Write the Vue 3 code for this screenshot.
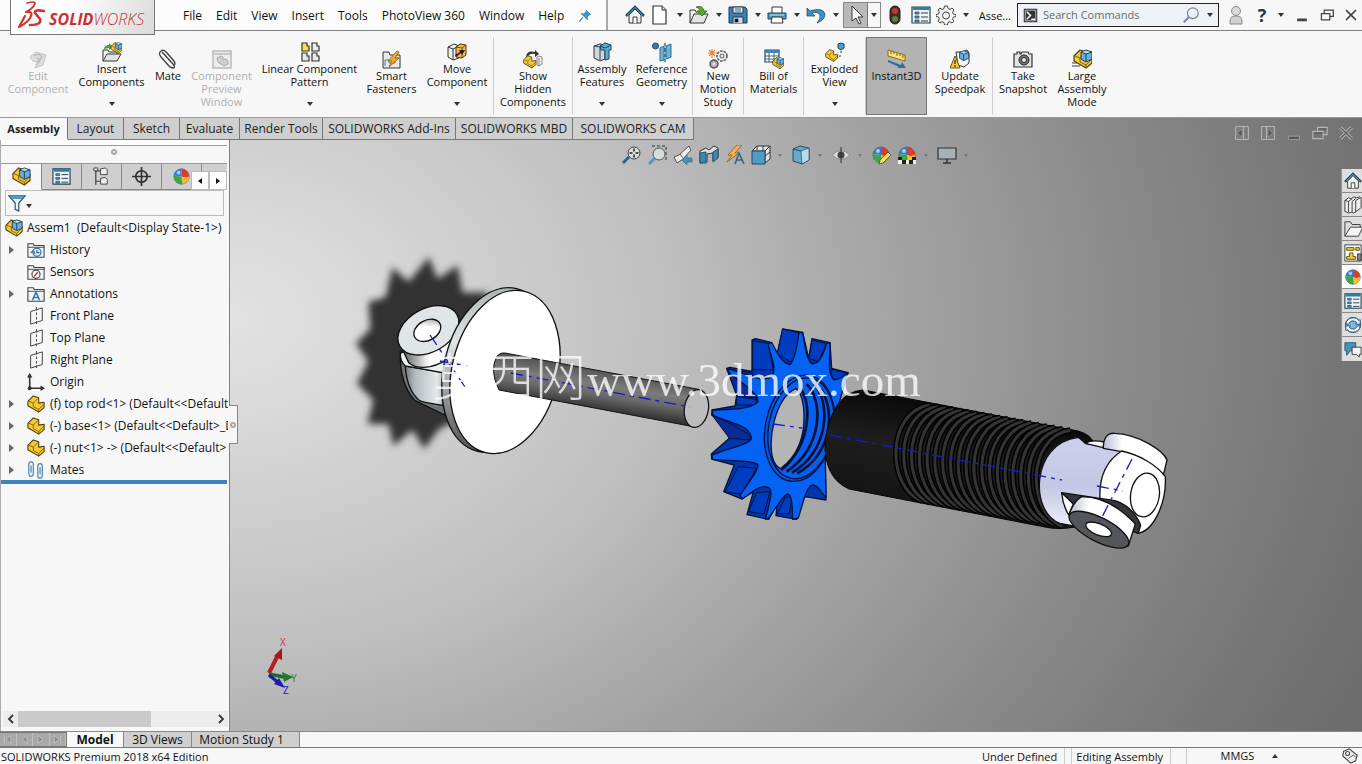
<script setup>
import { ref } from 'vue'

const sphere = '<circle cx="10" cy="10" r="8" fill="#e8e8e8" stroke="#444" stroke-width=".8"/><path d="M10 10V2a8 8 0 0 0-8 7z" fill="#2e7fd0"/><path d="M10 10 10 2a8 8 0 0 1 8 8q-4 2-8 0z" fill="#e03a2c"/><path d="M10 10q4 2 8 0a8 8 0 0 1-7 8z" fill="#f2c026"/><path d="M10 10 2 9a8 8 0 0 0 9 9z" fill="#3aa64a"/><circle cx="7" cy="6" r="2" fill="#fff" opacity=".6"/>'
const block = '<path d="M1 7 7 1l6 2v6l6-1v6l-6 5-12-7z" fill="#f7c92f" stroke="#4c3c10" stroke-width="1.200" stroke-linejoin="round"/><path d="m2 7 5 2 5-5M7 9v4l6 3 6-6M13 16v3" fill="none" stroke="#6b5413" stroke-width=".9"/>'
const cube = '<path d="m8 3 5-2 6 2v7l-6 3-5-3z" fill="#69aede" stroke="#1e3f5c"/><path d="m8 3 5 2 6-2M13 5v8" stroke="#1e3f5c" fill="none"/><path d="m9.500 3 3.500-1.300L17 3l-4 1.300z" fill="#b5dcf5"/>'
const folder = '<path d="M1 18V3h6l1 2h11v13z" fill="#f2f4f5" stroke="#444" stroke-width="1.200"/><path d="M1 7h18" stroke="#444"/>'
const plane = '<path d="M4 5 17 1v14L4 19zM10.500 0v4M10.500 6v3M10.500 11v3M10.500 16v3" fill="none" stroke="#444" stroke-width="1.100"/>'
const list = '<path d="M1 2h18v16H1z" fill="#eef2f4" stroke="#26404f" stroke-width="1.200"/><path d="M2 2h16v3H2z" fill="#2f7ea8"/><path d="M4 7h4v2H4zM4 11h4v2H4zM4 15h4v2H4z" fill="#4b9ac4" stroke="#26404f" stroke-width=".7"/><path d="M10 8h7M10 12h7M10 16h7" stroke="#26404f"/>'
const home = '<path d="M4 10v8h12v-8l-6-6z" fill="#f1f3f4" stroke="#333"/><path d="m1 11 9-9 9 9" fill="none" stroke="#22465c" stroke-width="2.500"/><path d="m2 10.500 8-8 8 8" fill="none" stroke="#58a3c8"/><path d="M8 18v-6h4v6" fill="#fff" stroke="#333"/>'

const icons = {
  home, list, block, sphere, plane,
  doc: '<path d="M3 1h9l4 4v14H3z" fill="#fff" stroke="#333" stroke-width="1.200"/><path d="M12 1v4h4" fill="#ddd" stroke="#333"/>',
  open: '<path d="M1 18V5h5l1 2h8v3" fill="#f0f0f0" stroke="#333"/><path d="m1 18 4-9h14l-4 9z" fill="#e2e4e5" stroke="#333"/><path d="M7 2q7-2 8 4h3l-5 5-5-5h3q0-3-4-4z" fill="#58a829" stroke="#2d6a13" stroke-width=".8"/>',
  save: '<path d="M1 2h16l2 2v14H1z" fill="#3d7fae" stroke="#1d3c54"/><path d="M5 2h10v6H5z" fill="#e7eef3" stroke="#1d3c54"/><path d="M5 18v-6h10v6" fill="#cfd9e0" stroke="#1d3c54"/><path d="M7 4h6M7 6h6M7 14h3v3H7z" stroke="#1d3c54" stroke-width=".8"/>',
  print: '<path d="M5 8V2h10v6" fill="#fff" stroke="#333"/><path d="M1 8h18v6H1z" fill="#4b9ac4" stroke="#23465b"/><path d="M5 12h10l1 6H4z" fill="#fff" stroke="#333"/><path d="M3 10h14" stroke="#b9def0"/>',
  undo: '<path d="M1 3v8h8L6 8q6-2 8 2 1 4-3 8 8-3 8-9Q17 2 4 6z" fill="#3f93c4" stroke="#1d4e70" stroke-width=".8"/>',
  pointer: '<path d="M6 1v15l4-3 3 6 2-1-3-6h5z" fill="#fff" stroke="#333"/>',
  light: '<rect x="5" y="1" width="10" height="18" rx="5" fill="#4a2a22" stroke="#222"/><circle cx="10" cy="6" r="3" fill="#c4352c"/><circle cx="10" cy="14" r="3" fill="#3f8f3f"/>',
  gear: '<path d="M8.500 1h3l.5 2.500 2 1L16 3l2 2-1.500 2.200.8 1.800 2.700.5v2l-2.700.7-.8 2L18 16l-2 2-2.200-1.300-1.800.8-.5 2.500h-3L8 17.500l-2-.8L4 18l-2-2 1.300-2-.8-2L0 11.500v-2L2.500 9l.8-2L2 5l2-2 2 1.500 2-1z" fill="#f4f4f4" stroke="#444"/><circle cx="10" cy="10.500" r="3.500" fill="none" stroke="#444"/>',
  pin: '<path d="m12 2 6 6-2 .5-3 3 .5 4-9-9 4 .5 3-3z" fill="#3c96cd" stroke="#2878a8"/><path d="m7 12-5 6" stroke="#2878a8" stroke-width="1.500"/>',
  user: '<circle cx="10" cy="6" r="4.500" fill="#d9d9d9" stroke="#8a8a8a"/><path d="M4 19v-3q0-5 6-5t6 5v3z" fill="#d0d0d0" stroke="#8a8a8a"/>',
  lens: '<circle cx="12" cy="8" r="6" fill="#e6f2fa" stroke="#7a8594" stroke-width="1.300"/><path d="m8 12-6 6" stroke="#8089b0" stroke-width="2.500"/>',
  prompt: '<path d="M1 1h18v18H1z" fill="#333"/><path d="M3 3h14v14H3z" fill="none" stroke="#ddd"/><path d="m5 5 5 5-5 5M11 15h5" fill="none" stroke="#fff" stroke-width="2"/>',
  min: '<path d="M3 15h14v4H3z" fill="#444"/>',
  restore: '<path d="M6 8V3h13v9h-5M2 8h12v9H2z" fill="none" stroke="#444" stroke-width="1.800"/>',
  close: '<path d="m3 3 14 14M17 3 3 17" stroke="#444" stroke-width="2.200"/>',
  editc: '<path d="m2 8 6-5 10 3-3 10-8 3 3-6-5-1z" fill="#dedede" stroke="#c4c4c4"/><path d="M6 7q5-4 8 1l-6 8M9 8l3 5" stroke="#bcbcbc" fill="none" stroke-width="1.500"/>',
  insert: '<path d="M1 19V8h5l1 2h8v3" fill="#f2f2f2" stroke="#333"/><path d="m1 19 4-7h14l-4 7z" fill="#e2e4e5" stroke="#333"/><path d="M2 8q0-5 5-5V1l4 4-4 3V6Q4 6 2 8z" fill="#4b9c35"/><g transform="translate(8.500 0) scale(.6)">' + block + cube + '</g>',
  mate: '<path d="m4 3 11 12q3 4 0 4-2 0-4-2L3 8Q0 4 3 2t6 2l7 8q2 3 0 4M6 5l7 8" fill="none" stroke="#444" stroke-width="1.400"/>',
  preview: '<path d="M1 2h18v17H1zM1 5h18" fill="#ededed" stroke="#bbb" stroke-width="1.500"/><path d="m5 9 4-2 2 1v3l3-1 2 2v3l-4 2-6-4z" fill="#d0d0d0" stroke="#aaa"/>',
  linear: '<g stroke="#333" stroke-width="1.200"><path d="M2 1h5v3h2v5H2z" fill="#f3e44c"/><path d="M12 1h5v3h2v5h-7zM2 11h5v3h2v5H2zM12 11h5v3h2v5h-7z" fill="#e8eaec"/></g>',
  smart: '<path d="M1 19V3h6l1 3h10v13z" fill="#e4eaee" stroke="#333"/><path d="M3 17v-6h4v3h6v-5h4" fill="none" stroke="#50799a"/><path d="M15 2 6 12h4l-3 6 10-9h-4l4-6z" fill="#f6a623" stroke="#8b5a10" stroke-width=".8"/>',
  move: '<path d="m1 5 6-3 5 2v12l-6 2-5-3z" fill="#eceef0" stroke="#333"/><path d="m1 5 5 2v11M6 7l6-3" fill="none" stroke="#333"/><path d="m9 5 4-3 6 1v10l-4 3-6-1z" fill="#f7b84e" stroke="#4c3410"/><path d="m9 5 6 1 4-3M15 6v10" fill="none" stroke="#4c3410" stroke-width=".8"/><path d="M8 13 13 10 12 8l6 0-3 5-1-2-5 4z" fill="#222"/>',
  show: '<path d="M3 8q1-7 9-5V1l4 4-4 3V5Q6 4 5 8z" fill="#333"/><g transform="translate(0 6) scale(.68)">' + block + '</g><path d="m14 8 2-1 3 1v7l-3 2-2-1zM16 9v8" fill="#eee" stroke="#888"/>',
  features: '<path d="m2 4 6-2 5 1v14l-5 2-6-3z" fill="#cfd6da" stroke="#333"/><path d="m8 4 5-3 6 2v5h-2v9l-4 1V8H9z" fill="#5eaad4" stroke="#1e4763"/><path d="m8 4 5 2 6-3M2 4l6 1v13" fill="none" stroke="#1e4763"/>',
  geometry: '<circle cx="3.500" cy="4" r="3" fill="#2e7fae" stroke="#1e4763"/><path d="m8 6 4-2v14l-4 1zM14 4l5-2v13l-5 2z" fill="#69b4dc" stroke="#2c6d93"/><path d="M13 1v3M13 6v4M13 12v3M13 17v3" stroke="#223"/>',
  motion: '<path d="M4 0v9M0 4h9M1 1l6 6M7 1 1 7" stroke="#e88a2a" stroke-width="1.200"/><circle cx="14" cy="7" r="5" fill="#f2f2f2" stroke="#555" stroke-width="1.500" stroke-dasharray="2.500 1"/><circle cx="14" cy="7" r="2" fill="none" stroke="#555"/><circle cx="6" cy="15" r="4" fill="#aaa" stroke="#555" stroke-width="1.500"/><circle cx="6" cy="15" r="1.500" fill="#eee"/>',
  bill: '<path d="M1 1h14v12H1z" fill="#fff" stroke="#1e4763" stroke-width="1.200"/><path d="M1 1h14v3H1z" fill="#3d86b8"/><path d="M1 7h14M1 10h14M5 4v9M10 4v9" stroke="#1e4763" stroke-width=".8"/><g transform="translate(8 8) scale(.62)">' + block + cube + '</g>',
  exploded: '<g transform="translate(0 7) scale(.66)">' + block + '</g><path d="m13 2 3-1 3 1v4l-3 2-3-2z" fill="#4f9fd0" stroke="#1e3f5c"/><path d="M16 9v3M16 14h-4" stroke="#333" stroke-dasharray="2 1"/>',
  instant: '<path d="m1 1 17 5v6L1 7z" fill="#fbe27a" stroke="#8c6a1c"/><path d="M4 2v3M7 3v2M10 4v3M13 5v2M16 6v3" stroke="#7a5a12"/><path d="m1 11 13 5 1-3 4 6H10l2-1-11-5z" fill="#2f6fa0"/>',
  update: '<path d="M6 3h6l5-2 2 3v10l-5 4-6-2z" fill="#f4f4f4" stroke="#333"/><g transform="translate(3 1) scale(.82)">' + cube + '</g><path d="m5 7 5 12H0z" fill="#f8cf2f" stroke="#6a5410"/><path d="M5 11v4M5 16v2" stroke="#333" stroke-width="1.300"/>',
  camera: '<path d="M1 5h3V3h3v2h1l1-2h6l1 2h3v13H1z" fill="#e4e4e4" stroke="#333" stroke-width="1.200"/><circle cx="11" cy="11" r="5" fill="#777" stroke="#222"/><circle cx="11" cy="11" r="2.500" fill="#eee" stroke="#222"/>',
  large: '<g transform="translate(1 0)">' + block + cube + '</g><path d="M0 14h5M0 17h8" stroke="#444" stroke-width="1.200"/>',
  assembly: block + cube,
  tree: '<path d="M4 1v18M4 4h5M4 15h5" stroke="#444" stroke-width="1.300" fill="none"/><path d="M2 1h4v3H2zM9 2l5-1 2 2v5H9zM9 12l5-1 2 2v5H9z" fill="#eee" stroke="#444"/>',
  target: '<circle cx="10" cy="10" r="6" fill="none" stroke="#333" stroke-width="1.800"/><path d="M10 0v20M0 10h20" stroke="#333" stroke-width="1.800"/>',
  filter: '<path d="M1 2h18l-7 8v9l-4-2v-7z" fill="#eef3f5" stroke="#23566e" stroke-width="1.300"/><path d="M2 2.500h16l-3 3H5z" fill="#4a9bbd"/>',
  history: folder + '<circle cx="11" cy="12.500" r="4.500" fill="#dcecf6" stroke="#2d7098" stroke-width="1.300"/><path d="M11 10v3h3M4 13l3-2 2 3" stroke="#2d7098" fill="none" stroke-width="1.400"/>',
  sensors: folder + '<circle cx="10" cy="12.500" r="4.500" fill="#fff" stroke="#444" stroke-width="1.300"/><path d="m8 15 4-5" stroke="#c33" stroke-width="1.500"/>',
  notes: folder + '<path d="m6 17 4-9 4 9M7.500 14h5" fill="none" stroke="#2d76b5" stroke-width="1.700"/>',
  origin: '<path d="M3 2v15h14" fill="none" stroke="#333" stroke-width="1.800"/><path d="m0 5 3-5 3 5zM15 14l5 3-5 3z" fill="#333"/><circle cx="3" cy="17" r="2.200" fill="#333"/>',
  mates: '<path d="M2 5v8q0 4 2.500 4T7 13V4q0-3-2.500-3T2 4v8M4.500 5v8M12 8v8q0 3 2.500 3t2.500-3V6q0-3-2.500-3T12 6v6M14.500 7v8" fill="none" stroke="#3d86ae" stroke-width="1.300"/>',
  zoomfit: '<circle cx="13" cy="8" r="6" fill="#ddd" stroke="#444"/><path d="M13 3.500v3M13 9.500v3M8.500 8h3M14.500 8h3" stroke="#222" stroke-width="1.500"/><path d="m8 12-6 6" stroke="#355f7c" stroke-width="3"/>',
  zoomarea: '<path d="M5 1h14v14" fill="none" stroke="#333" stroke-dasharray="3 2"/><circle cx="12" cy="9" r="6" fill="#d6dcd8" stroke="#555"/><path d="m8 13-6 6" stroke="#5299bd" stroke-width="3"/>',
  prev: '<path d="m1 12 5-2 10-9 2 4-8 9-6 4z" fill="#eee" stroke="#555"/><path d="m7 9 3 4" stroke="#555"/><path d="m9 15 5-5v3h5v4h-5v3z" fill="#4b8fb8" stroke="#2c6286" stroke-width=".6"/>',
  section: '<path d="m1 6 6-3 3 2 5-4 4 2v9l-5 4V8l-6 1v8l-7 1z" fill="#d5dfe5" stroke="#333"/><path d="m1 8 6-1v11H1zM14 7l5-3v9l-5 4z" fill="#3b87b2" stroke="#24536f"/>',
  annot: '<path d="M12 0 3 10h4l-5 7L14 8h-4l7-8z" fill="#f3b057" stroke="#8b5a20" stroke-width=".8"/><path d="m10 19 4-11 5 11M11 15h6" fill="none" stroke="#30688c" stroke-width="1.600"/>',
  orient: '<path d="M6 1h13v13l-5 4V6H1z" fill="#e5e5e5" stroke="#333"/><path d="M6 1v4M12 1v5M14 6l5-5M14 11l5-4" stroke="#333"/><path d="M1 6h13v13H1z" fill="#4e9bc5" stroke="#214b64"/>',
  style: '<path d="m2 4 7-3 9 2v12l-7 4-9-3z" fill="#65a9ce" stroke="#2a4b5e"/><path d="m2 4 8 2 8-3v12l-7 4-1-13z" fill="#bcdcec" stroke="#2a4b5e" stroke-width=".7"/>',
  eye: '<path d="M1 10q9-9 18 0-9 9-18 0z" fill="#d8d8d8" stroke="#888"/><circle cx="10" cy="10" r="3.500" fill="#444"/><path d="M10 2v16" stroke="#333"/>',
  appear: sphere + '<path d="m9 15 8-8 3 3-8 8-4 1z" fill="#f1df68" stroke="#444" stroke-width=".8"/>',
  scene: sphere + '<path d="M1 12h4v3H1zM15 12h4v3h-4zM5 15h4v4H5zM12 15h4v4h-4z" fill="#222"/><path d="M1 15h4v4H1zM9 15h3v4H9zM16 15h3v4h-3z" fill="#eee"/>',
  monitor: '<path d="M1 3h18v11H1z" fill="#a7b0b4" stroke="#333" stroke-width="1.200"/><path d="M10 14v4M6 18h8" stroke="#333" stroke-width="1.500"/>',
  paneL: '<path d="M2 2h16v16H2zM12 2v16" fill="none" stroke="#bbb" stroke-width="1.200"/><path d="M10 5v10l-6-5z" fill="#555" stroke="#bbb" stroke-width=".6"/>',
  paneR: '<path d="M2 2h16v16H2zM8 2v16" fill="none" stroke="#bbb" stroke-width="1.200"/><path d="M10 5v10l6-5z" fill="#555" stroke="#bbb" stroke-width=".6"/>',
  dmin: '<path d="M3 14h14v4H3z" fill="#555" stroke="#aaa"/>',
  drestore: '<path d="M7 8V3h12v9h-5M1 8h13v9H1z" fill="none" stroke="#b5b5b5" stroke-width="1.400"/><path d="M8 5h10M3 10h10" stroke="#555" stroke-width="1.500"/>',
  dclose: '<path d="m3 3 14 14M17 3 3 17" stroke="#bbb" stroke-width="4"/><path d="m3 3 14 14M17 3 3 17" stroke="#5c5c5c" stroke-width="1.800"/>',
  books: '<path d="m1 5 4-3 3 1 3-2 3 1 3-1 2 1v11l-8 6-3-1-3 1-4-2z" fill="#eee" stroke="#333"/><path d="m5 6v12M9 6v12M13 5v13M1 5l4 1 4-3M9 6l4-3M13 5l5-3" stroke="#333" fill="none"/>',
  folder2: '<path d="M1 18V2h6l2 3h9v4" fill="#ddd" stroke="#333"/><path d="m1 18 6-10h14l-5 10z" fill="#f4f4f4" stroke="#333"/>',
  palette: '<path d="M1 1h18v18H1z" fill="#fff" stroke="#333"/><path d="M3 4h8v3H3zM13 4h4v3h-4zM6 10h4v4h3v3H3v-3h3z" fill="#f4cf2e" stroke="#5c4a10"/><path d="M15 11h4v7h-4z" fill="#888" stroke="#333"/>',
  refresh: '<circle cx="10" cy="10" r="8.500" fill="#7db8e0" stroke="#2b5b80"/><path d="M2 9Q3 2 11 2q4 0 5 3l2-1v5h-5l1-2q-6-4-9 2zM18 11q-1 7-9 7-4 0-5-3l-2 1v-5h5l-1 2q6 4 9-2z" fill="#f5f8fa" stroke="#234e77"/>',
  chat: '<path d="M1 3h12v9H7l-4 5v-5H1z" fill="#4a93b8" stroke="#23566e"/><path d="M9 8h10v8h-2v3l-3-3H9z" fill="#f7f7f7" stroke="#333"/>',
  tag: '<path d="M2 4 9 1l10 8-2 7-6 3L1 10z" fill="#eee" stroke="#444" stroke-width="1.400"/><circle cx="7" cy="7" r="2.500" fill="none" stroke="#444" stroke-width="1.300"/><path d="m8 13 6-4 4 3" fill="none" stroke="#444"/>',
}

const menus = ['File', 'Edit', 'View', 'Insert', 'Tools', 'PhotoView 360', 'Window', 'Help']
const quick = [
  { icon: 'doc', label: 'New' }, { icon: 'open', label: 'Open' }, { icon: 'save', label: 'Save' },
  { icon: 'print', label: 'Print' }, { icon: 'undo', label: 'Undo' },
]
const ribbon = [
  { icon: 'editc', lines: ['Edit', 'Component'], w: 70, off: true },
  { icon: 'insert', lines: ['Insert', 'Components'], w: 77, drop: true },
  { icon: 'mate', lines: ['Mate'], w: 36 },
  { icon: 'preview', lines: ['Component', 'Preview', 'Window'], w: 71, off: true },
  { icon: 'linear', lines: ['Linear Component', 'Pattern'], w: 105, drop: true },
  { icon: 'smart', lines: ['Smart', 'Fasteners'], w: 59 },
  { icon: 'move', lines: ['Move', 'Component'], w: 73, drop: true, end: true },
  { icon: 'show', lines: ['Show', 'Hidden', 'Components'], w: 79, end: true },
  { icon: 'features', lines: ['Assembly', 'Features'], w: 58, drop: true },
  { icon: 'geometry', lines: ['Reference', 'Geometry'], w: 62, drop: true, end: true },
  { icon: 'motion', lines: ['New', 'Motion', 'Study'], w: 51, end: true },
  { icon: 'bill', lines: ['Bill of', 'Materials'], w: 60, end: true },
  { icon: 'exploded', lines: ['Exploded', 'View'], w: 62, drop: true, end: true },
  { icon: 'instant', lines: ['Instant3D'], w: 61, active: true },
  { icon: 'update', lines: ['Update', 'Speedpak'], w: 65, end: true },
  { icon: 'camera', lines: ['Take', 'Snapshot'], w: 60 },
  { icon: 'large', lines: ['Large', 'Assembly', 'Mode'], w: 58 },
]
const tabs = [
  { t: 'Assembly', w: 68 }, { t: 'Layout', w: 56 }, { t: 'Sketch', w: 56 }, { t: 'Evaluate', w: 60 },
  { t: 'Render Tools', w: 83 }, { t: 'SOLIDWORKS Add-Ins', w: 133 },
  { t: 'SOLIDWORKS MBD', w: 117 }, { t: 'SOLIDWORKS CAM', w: 121 },
]
const activeTab = ref('Assembly')
const windowIcons = [['paneL', 'Show left pane'], ['paneR', 'Show right pane'], ['dmin', 'Minimize document'], ['drestore', 'Restore document'], ['dclose', 'Close document']]
const panelTabs = [['assembly', 'FeatureManager'], ['list', 'PropertyManager'], ['tree', 'ConfigurationManager'], ['target', 'DimXpertManager'], ['sphere', 'DisplayManager']]
const tree = [
  { icon: 'history', t: 'History', open: true },
  { icon: 'sensors', t: 'Sensors' },
  { icon: 'notes', t: 'Annotations', open: true },
  { icon: 'plane', t: 'Front Plane' },
  { icon: 'plane', t: 'Top Plane' },
  { icon: 'plane', t: 'Right Plane' },
  { icon: 'origin', t: 'Origin' },
  { icon: 'block', t: '(f) top rod<1> (Default<<Default>', open: true },
  { icon: 'block', t: '(-) base<1> (Default<<Default>_D', open: true },
  { icon: 'block', t: '(-) nut<1> -> (Default<<Default>', open: true },
  { icon: 'mates', t: 'Mates', open: true },
]
const hud = [
  { icon: 'zoomfit', label: 'Zoom to fit' }, { icon: 'zoomarea', label: 'Zoom to area' }, { icon: 'prev', label: 'Previous view' },
  { icon: 'section', label: 'Section view' }, { icon: 'annot', label: 'Annotation views' },
  { icon: 'orient', label: 'View orientation', drop: true }, { icon: 'style', label: 'Display style', drop: true },
  { icon: 'eye', label: 'Hide items', drop: true }, { icon: 'appear', label: 'Edit appearance' },
  { icon: 'scene', label: 'Apply scene', drop: true }, { icon: 'monitor', label: 'View settings', drop: true },
]
const tasks = [['home', 'Resources'], ['books', 'Design library'], ['folder2', 'File explorer'], ['palette', 'View palette'], ['sphere', 'Appearances'], ['list', 'Custom properties'], ['refresh', 'Updates'], ['chat', 'Forum']]
const navs = [['M4 3v10M12 3v10L6 8z', 'First'], ['M11 3v10L5 8z', 'Previous'], ['M5 3v10l6-5z', 'Next'], ['M12 3v10M4 3v10l6-5z', 'Last']]

const ribs = Array.from({ length: 19 }, (_, i) => {
  const x = i * 7.8
  return `translate(${x.toFixed(1)} ${(x * 0.18).toFixed(1)})`
})
const rib = 'M930 405C886 411 886 488 922 501'
</script>

<template>
  <div class="app">
    <header class="titlebar">
      <div class="logo">
        <svg class="ds" viewBox="0 0 28 28" aria-hidden="true" fill="none" stroke="#d5342c" stroke-linecap="round" stroke-linejoin="round">
          <path d="M10 2Q17 0 18 2 17 7 9 11" stroke-width="1.800" />
          <path d="M9 11Q16 10 14 15 12 21 2 26L8 15" stroke-width="2.200" />
          <path d="M27 10Q17 8 18 12L23 18Q25 24 13 24" stroke-width="2.600" />
        </svg>
        <span class="word"><b>SOLID</b>WORKS</span>
      </div>
      <nav class="menus">
        <button v-for="m in menus" :key="m" type="button">{{ m }}</button>
        <button type="button" class="pin" aria-label="Pin menu"><svg viewBox="0 0 20 20" v-html="icons.pin" /></button>
      </nav>
      <div class="quick">
        <button type="button" class="ib homeb" aria-label="Home"><svg viewBox="0 0 20 20" v-html="icons.home" /></button>
        <span v-for="q in quick" :key="q.icon" class="split">
          <button type="button" class="ib" :aria-label="q.label"><svg viewBox="0 0 20 20" v-html="icons[q.icon]" /></button>
          <button type="button" class="caret" :aria-label="q.label + ' options'" />
        </span>
        <span class="selectbox">
          <button type="button" class="ib sel" aria-label="Select"><svg viewBox="0 0 20 20" v-html="icons.pointer" /></button>
          <button type="button" class="caret" aria-label="Select options" />
        </span>
        <button type="button" class="ib" aria-label="Rebuild"><svg viewBox="0 0 20 20" v-html="icons.light" /></button>
        <button type="button" class="ib" aria-label="File properties"><svg viewBox="0 0 20 20" v-html="icons.list" /></button>
        <span class="split">
          <button type="button" class="ib" aria-label="Options"><svg viewBox="0 0 20 20" v-html="icons.gear" /></button>
          <button type="button" class="caret" aria-label="More options" />
        </span>
      </div>
      <span class="docname">Asse...</span>
      <div class="search">
        <svg class="prompt" viewBox="0 0 20 20" aria-hidden="true" v-html="icons.prompt" />
        <input type="text" placeholder="Search Commands" aria-label="Search Commands">
        <button type="button" class="ib" aria-label="Search"><svg viewBox="0 0 20 20" v-html="icons.lens" /></button>
        <button type="button" class="caret" aria-label="Search options" />
      </div>
      <div class="win">
        <button type="button" class="ib" aria-label="User"><svg viewBox="0 0 20 20" v-html="icons.user" /></button>
        <span class="split help">
          <button type="button" class="q" aria-label="Help topics">?</button>
          <button type="button" class="caret" aria-label="Help options" />
        </span>
        <button type="button" class="ws" aria-label="Minimize"><svg viewBox="0 0 20 20" v-html="icons.min" /></button>
        <button type="button" class="ws" aria-label="Restore"><svg viewBox="0 0 20 20" v-html="icons.restore" /></button>
        <button type="button" class="ws" aria-label="Close"><svg viewBox="0 0 20 20" v-html="icons.close" /></button>
      </div>
    </header>

    <div class="ribbon">
      <button
        v-for="r in ribbon" :key="r.icon" type="button" class="tool"
        :class="{ drop: r.drop, off: r.off, end: r.end, active: r.active }"
        :disabled="r.off" :style="{ width: r.w + 'px' }"
      >
        <svg viewBox="0 0 20 20" v-html="icons[r.icon]" />
        <span class="lbl"><span v-for="l in r.lines" :key="l">{{ l }}</span></span>
        <i v-if="r.drop" class="tri" />
      </button>
    </div>

    <main>
      <div class="tabrow">
        <div class="tabs" role="tablist">
          <button
            v-for="t in tabs" :key="t.t" type="button" role="tab" :aria-selected="activeTab === t.t"
            :class="{ on: activeTab === t.t }" :style="{ width: t.w + 'px' }" @click="activeTab = t.t"
          >{{ t.t }}</button>
        </div>
        <div class="docwin">
          <button v-for="w in windowIcons" :key="w[0]" type="button" :aria-label="w[1]"><svg viewBox="0 0 20 20" v-html="icons[w[0]]" /></button>
        </div>
      </div>

      <div class="work">
        <aside>
          <div class="grip"><i /></div>
          <div class="ptabs">
            <button v-for="(p, i) in panelTabs" :key="p[0]" type="button" :class="{ on: i === 0 }" :aria-label="p[1]"><svg viewBox="0 0 20 20" v-html="icons[p[0]]" /></button>
            <div class="parrows">
              <button type="button" aria-label="Previous tabs"><i class="la" /></button>
              <button type="button" aria-label="Next tabs"><i class="ra" /></button>
            </div>
          </div>
          <button type="button" class="filter" aria-label="Filter"><svg viewBox="0 0 20 20" v-html="icons.filter" /><i class="tri" /></button>
          <div class="root"><svg viewBox="0 0 20 20" v-html="icons.assembly" /><span>Assem1&nbsp; (Default&lt;Display State-1&gt;)</span></div>
          <ul class="tree">
            <li v-for="n in tree" :key="n.t">
              <button v-if="n.open" type="button" class="exp" :aria-label="'Expand ' + n.t"><i class="ra" /></button>
              <span v-else class="exp" />
              <svg viewBox="0 0 20 20" v-html="icons[n.icon]" />
              <span>{{ n.t }}</span>
            </li>
          </ul>
          <div class="rollback" />
          <div class="hscroll">
            <button type="button" aria-label="Scroll left"><svg viewBox="0 0 10 10"><path d="M7 1 3 5l4 4" /></svg></button>
            <div class="track"><div class="thumb" /></div>
            <button type="button" aria-label="Scroll right"><svg viewBox="0 0 10 10"><path d="m3 1 4 4-4 4" /></svg></button>
          </div>
          <button type="button" class="fly" aria-label="Collapse panel"><i /></button>
        </aside>

        <section class="view">
          <svg class="scene" viewBox="230 140 1132 591" preserveAspectRatio="xMinYMin meet" role="img" aria-label="Shock absorber assembly">
            <defs>
              <filter id="soft" x="-20%" y="-20%" width="140%" height="140%"><feGaussianBlur stdDeviation="4" /></filter>
              <linearGradient id="rod" x1="610" y1="368" x2="603" y2="412" gradientUnits="userSpaceOnUse">
                <stop offset="0" stop-color="#4a4a4a" /><stop offset=".4" stop-color="#7c7c7c" /><stop offset=".65" stop-color="#686868" /><stop offset="1" stop-color="#2e2e2e" />
              </linearGradient>
              <linearGradient id="edge" x1="0" y1="0" x2="0" y2="1"><stop offset="0" stop-color="#aab0b0" /><stop offset=".4" stop-color="#dfe6e6" /><stop offset="1" stop-color="#555" /></linearGradient>
              <linearGradient id="steel" x1="0" y1="0" x2="1" y2="0"><stop offset="0" stop-color="#777d80" /><stop offset=".25" stop-color="#b5bbbe" /><stop offset=".8" stop-color="#e4e8ea" /><stop offset="1" stop-color="#aaa" /></linearGradient>
              <linearGradient id="ringside" x1="0" y1="0" x2="1" y2="0"><stop offset="0" stop-color="#555" /><stop offset=".5" stop-color="#fff" /><stop offset="1" stop-color="#eee" /></linearGradient>
              <linearGradient id="hole" x1="0" y1="1" x2="1" y2="0"><stop offset=".6" stop-color="#fff" /><stop offset="1" stop-color="#888" /></linearGradient>
              <linearGradient id="lilac" x1="0" y1="0" x2="0" y2="1"><stop offset="0" stop-color="#cdd0ec" /><stop offset=".55" stop-color="#c4c7e4" /><stop offset="1" stop-color="#eceefa" /></linearGradient>
              <linearGradient id="ear" x1="0" y1="0" x2="1" y2="0"><stop offset="0" stop-color="#b9bcd4" /><stop offset=".3" stop-color="#fff" /></linearGradient>
              <linearGradient id="rubber" x1="950" y1="410" x2="932" y2="505" gradientUnits="userSpaceOnUse"><stop offset="0" stop-color="#0c0c0c" /><stop offset=".45" stop-color="#1e1e1e" /><stop offset="1" stop-color="#151515" /></linearGradient>
            </defs>

            <path filter="url(#soft)" transform="translate(17 14) scale(.96)" fill="#333" d="M429 253 438 276 459 262 464 290 490 290 480 350 470 400 455 425 440 432 424 453 412 433 392 450 387 427 365 427 371 402 354 385 366 362 353 343 368 328 366 300 384 295 391 264 408 279z" />

            <g transform="translate(340 240) scale(.3333)" stroke="#111" stroke-width="4">
              <path d="M181 335Q178 430 225 482L315 525 320 395 200 350z" fill="#6f7476" />
              <path d="M196 378Q200 450 240 483 270 492 310 496L315 398z" fill="url(#steel)" />
              <path d="M181 340Q180 365 196 378L308 398 330 345 240 310z" fill="#eef1f2" />
              <path d="M186 325 206 368Q230 388 270 380 310 370 330 350L350 240z" fill="url(#ringside)" />
              <ellipse cx="265" cy="271" rx="98" ry="65" transform="rotate(-29 265 271)" fill="#e0e6e8" />
              <ellipse cx="262" cy="271" rx="43" ry="30" transform="rotate(-29 262 271)" fill="url(#hole)" />
              <ellipse cx="471" cy="390" rx="159" ry="251" transform="rotate(13.500 471 390)" fill="url(#edge)" />
              <ellipse cx="495" cy="396" rx="159" ry="249" transform="rotate(13.500 495 396)" fill="#fff" />
            </g>
            <path d="M505 353 702 390 695 427 499 390Q489 370 497 356 501 352 505 353z" fill="url(#rod)" stroke="#151515" />
            <ellipse cx="696.500" cy="408.500" rx="12" ry="19" transform="rotate(9 696 408)" fill="#bdbdbd" stroke="#151515" stroke-width="1.300" />

            <g transform="translate(690 310) scale(.3333)" stroke="#02133f" stroke-width="4" stroke-linejoin="round">
              <path fill="#0036ae" d="M278 57 338 67 356 145 366 86 420 98 425 175 474 188 440 280 405 400 408 570 360 562 340 560 320 628 258 617 262 580 236 628 171 614 190 545 155 567 101 545 133 465 65 447 64 432 118 385 118 350 65 315 66 300 135 288 140 255 110 175 120 172 186 184 186 90 196 86 242 97 262 130z" />
              <path fill="#0a2a94" stroke-width="3" d="M110 175 188 190 200 265 140 255zM66 315 130 345 185 378 180 390 118 385z" />
              <path fill="#003cc0" stroke-width="3" d="M278 57 327 69 316 150 300 155 262 130zM188 92 235 101 250 180 188 178zM366 90 410 100 385 155 357 145zM425 178 474 190 445 210 425 205zM140 260 200 268 195 285 140 285zM145 470 200 475 155 552 105 546zM200 548 240 545 222 612 176 605zM286 562 306 560 298 612 262 610z" />
              <path fill="#0463f5" d="M235 101 245 97C262 130 274 157 300 164 315 150 320 110 327 69L338 67C345 110 350 150 365 160 390 165 400 130 410 101L420 98C420 140 412 185 430 208 445 215 460 195 474 188L450 270 405 400 408 563C390 545 385 525 368 525 350 530 345 560 325 624L308 628C307 590 307 555 292 552 275 560 262 590 236 624L226 628C235 590 253 540 235 532 210 525 195 540 157 567L150 556C170 525 208 480 203 463 180 450 145 455 68 448L66 436C110 415 180 405 184 385 182 345 120 340 68 315L68 300C120 300 190 295 204 275 205 245 145 215 112 182L120 178C170 190 215 220 246 200 262 170 240 140 235 101z" />
              <ellipse cx="329" cy="355" rx="103" ry="161" transform="rotate(11 329 355)" fill="#0356e4" />
              <ellipse cx="333" cy="355" rx="97" ry="153" transform="rotate(11 333 355)" fill="#0560ee" />
              <path d="M325 232C365 260 370 400 274 480M350 222C400 270 400 410 290 485M372 222C425 280 415 425 306 488M393 238C440 310 420 435 322 490" fill="none" stroke="#03123a" stroke-width="8" />
              <path d="M318 236C255 262 228 400 252 455Q260 472 272 476C320 440 345 385 342 310 340 270 330 245 318 236z" fill="#b5b5b5" />
            </g>

            <path d="M863 390 1078 431Q1090 434 1094 443L1075 527Q1058 530 1045 527L849 489Q824 478 825 442 832 392 863 390z" fill="url(#rubber)" stroke="#050505" />
            <g fill="none">
              <g v-for="r in ribs" :key="r" :transform="r">
                <path :d="rib" stroke="#020202" stroke-width="6" />
                <path :d="rib" stroke="#343434" stroke-width="3" />
              </g>
            </g>

            <g transform="translate(900 380) scale(.3333)" stroke="#111" stroke-width="4" stroke-linejoin="round">
              <path d="M535 172C390 190 390 400 480 430L520 438 620 400 665 213 640 205 556 190z" fill="url(#lilac)" />
              <path d="M556 190Q575 178 612 186L610 203z" fill="#fff" />
              <path d="M610 205C610 175 620 158 645 160 710 162 790 210 801 240L791 282 665 215z" fill="url(#ear)" />
              <path d="M665 213C615 245 597 300 600 358L680 385 712 460C760 455 800 370 796 290 770 255 720 225 665 213z" fill="#fff" />
              <ellipse cx="735" cy="345" rx="43" ry="66" transform="rotate(9 735 345)" fill="#fff" />
              <path d="M485 338 645 362Q700 380 722 435L715 460 600 420 508 405z" fill="#34363c" />
              <path d="M485 338 520 372 506 405Q488 375 485 338z" fill="#fff" />
              <path d="M508 403Q520 365 545 350 630 350 706 432L685 498Q600 500 508 403z" fill="url(#ear)" />
              <ellipse cx="597" cy="449" rx="99" ry="36" transform="rotate(27 597 449)" fill="#55565c" />
              <ellipse cx="596" cy="448" rx="41" ry="17" transform="rotate(22 596 448)" fill="#fff" />
            </g>

            <g fill="none" stroke="#1a1acb" stroke-width="1.300" stroke-dasharray="12 5 4 5">
              <path d="M430 335 465 387M440 361 468 366M511 373 690 407M773 424 802 428M830 435 1062 480M1097 486 1123 491M1132 459 1100 521" />
            </g>

            <g class="mark">
              <text x="433" y="396" class="cjk">莫西网</text>
              <text x="587" y="396">www.3dmox.com</text>
            </g>

            <g stroke-width="3.500">
              <path d="M269 673 278 655" stroke="#b32020" stroke-width="4" /><path d="m282 648-8 8 8 4z" fill="#a11a1a" />
              <path d="M269 674 284 677" stroke="#1f6e28" /><path d="m282 672 11 5-9 5z" fill="#1d7a2a" />
              <path d="M269 675 280 684" stroke="#1c1c9a" /><path d="m279 678 6 10-11-4z" fill="#1c1cae" />
            </g>
            <g class="axes"><text x="280" y="646" fill="#d33">X</text><text x="291" y="682" fill="#2a7a33">Y</text><text x="283" y="694" fill="#2222c0">Z</text></g>
          </svg>

          <div class="hud">
            <span v-for="h in hud" :key="h.icon" class="split">
              <button type="button" class="ib" :aria-label="h.label"><svg viewBox="0 0 20 20" v-html="icons[h.icon]" /></button>
              <button v-if="h.drop" type="button" class="caret" :aria-label="h.label + ' options'" />
            </span>
          </div>
          <nav class="taskpane">
            <button v-for="(t, i) in tasks" :key="t[0]" type="button" :class="{ on: i === 4 }" :aria-label="t[1]"><svg viewBox="0 0 20 20" v-html="icons[t[0]]" /></button>
          </nav>
        </section>
      </div>
    </main>

    <div class="sheets">
      <div class="navs">
        <button v-for="n in navs" :key="n[1]" type="button" :aria-label="n[1]"><svg viewBox="0 0 16 16"><path :d="n[0]" /></svg></button>
      </div>
      <button type="button" class="sheet on">Model</button>
      <button type="button" class="sheet views">3D Views</button>
      <button type="button" class="sheet study">Motion Study 1</button>
    </div>
    <footer>
      <span class="edition">SOLIDWORKS Premium 2018 x64 Edition</span>
      <span class="cell">Under Defined</span>
      <span class="cell editing">Editing Assembly</span>
      <button type="button" class="units">MMGS<i /></button>
      <button type="button" class="tag" aria-label="Tags"><svg viewBox="0 0 20 20" v-html="icons.tag" /></button>
    </footer>
  </div>
</template>

<style>
body { margin: 0; }
</style>

<style scoped>
.app { min-height: 100vh; display: flex; flex-direction: column; background: #f7f7f7; color: #111; font: 12px/14px "Open Sans", "Noto Sans", "Noto Sans CJK SC", sans-serif; overflow: hidden; }
.app * { box-sizing: border-box; }
button { border: 0; padding: 0; margin: 0; background: none; color: inherit; font: inherit; display: flex; align-items: center; justify-content: center; white-space: nowrap; flex: none; }
svg { display: block; flex: none; }
i { display: block; }

.titlebar { height: 31px; display: flex; align-items: center; border-bottom: 1px solid #808080; position: relative; }
.logo { position: absolute; left: 10px; top: 0; z-index: 2; width: 145px; height: 35px; display: flex; align-items: center; gap: 4px; padding: 0 0 4px 6px; border: 1px solid #777; border-top: 0; background: linear-gradient(115deg, #fff 35%, #dadada); }
.ds { width: 28px; height: 28px; }
.word { color: #c93030; font-size: 16px; line-height: 20px; font-style: italic; font-weight: 300; padding-top: 8px; }
.word b { font-weight: 700; }
.menus { display: flex; align-items: center; gap: 14px; height: 30px; width: 608px; padding: 2px 14px 0 183px; border-right: 2px solid #aaa; background: #fcfcfc; flex: none; }
.pin { margin-left: auto; }
.pin svg { width: 14px; height: 14px; }
.quick { display: flex; align-items: center; padding-left: 17px; }
.ib svg { width: 20px; height: 20px; }
.homeb { margin-right: 5px; }
.split { display: flex; align-items: center; width: 39px; gap: 5px; }
.caret { width: 10px; height: 16px; }
.caret::before { content: ""; border: 3px solid transparent; border-top: 4px solid #333; border-bottom: 0; }
.selectbox { display: flex; border: 1px solid #888; margin-right: 4px; height: 26px; margin-left: -2px; }
.selectbox .sel { width: 24px; background: #b9b9b9; border-right: 1px solid #777; }
.selectbox .caret { width: 12px; height: 24px; }
.quick > .ib + .ib { margin-left: 6px; margin-right: 5px; }
.docname { margin-left: auto; margin-right: 6px; padding-top: 2px; font-size: 11px; }
.search { width: 202px; height: 24px; border: 1px solid #222; background: #eef1f6; display: flex; align-items: center; gap: 5px; padding: 0 3px 0 5px; flex: none; }
.prompt { width: 15px; height: 15px; }
.search input { flex: 1; min-width: 0; border: 0; padding: 0; outline: 0; background: none; font: inherit; font-size: 11px; color: #333; }
.search input::placeholder { color: #6a6a6a; opacity: 1; }
.search .ib svg { width: 18px; height: 18px; }
.win { display: flex; align-items: center; padding-left: 7px; }
.win .help { margin-left: 7px; width: 36px; }
.q { width: 18px; font-size: 18px; line-height: 22px; font-weight: 700; color: #333; }
.ws { width: 25px; height: 26px; }
.ws:last-child { width: 23px; }
.ws svg { width: 14px; height: 14px; }

.ribbon { height: 87px; display: flex; padding-left: 3px; border-bottom: 1px solid #999; }
.tool { flex-direction: column; justify-content: flex-start; height: 78px; margin-top: 6px; padding-top: 12px; font-size: 11px; line-height: 13px; }
.tool.drop { padding-top: 5px; }
.tool.end { border-right: 1px solid #cfcfcf; }
.tool.off { color: #b0b0b0; }
.tool.active { background: #b3b3b3; border: 1px solid #777; padding-top: 11px; margin-right: 1px; }
.tool svg { width: 20px; height: 20px; }
.lbl { display: flex; flex-direction: column; align-items: center; }
.tri { border: 3px solid transparent; border-top: 4px solid #333; border-bottom: 0; }
.tool .tri { margin-top: 14px; }

main { flex: 1; display: flex; flex-direction: column; background: radial-gradient(ellipse 1180px 900px at 230px 200px, #e2e2e2 0, #dadada 10%, #bebebe 38%, #a4a4a4 56%, #888 78%, #777 93%, #686868 110%); }
.tabrow { height: 22px; display: flex; justify-content: space-between; align-items: stretch; flex: none; }
.tabs { display: flex; }
.tabs button { border-right: 1px solid #777; border-bottom: 1px solid #777; background: #cfcfcf; color: #222; }
.tabs button.on { background: #f7f7f7; font-size: 11px; font-weight: 700; border-bottom-color: #f7f7f7; }
.docwin { display: flex; align-items: center; padding-top: 8px; gap: 10px; padding-right: 8px; }
.docwin svg { width: 16px; height: 16px; }

.work { flex: 1; display: flex; min-height: 0; }
aside { width: 230px; flex: none; background: #f7f7f7; border-right: 1px solid #808080; border-left: 1px solid #aaa; display: flex; flex-direction: column; position: relative; }
.grip { height: 24px; margin-right: 2px; position: relative; border-bottom: 1px solid #999; display: flex; justify-content: center; align-items: center; }
.grip::before { content: ""; position: absolute; left: 0; right: 0; top: 0; height: 5px; border-bottom: 1px solid #999; background: #fff; }
.grip i, .fly i { width: 6px; height: 6px; border: 2px solid #aaa; border-radius: 50%; }
.ptabs { display: flex; height: 26px; position: relative; margin-right: 2px; background: #cfcfcf; }
.ptabs > button { width: 40px; border-right: 1px solid #888; border-bottom: 1px solid #888; }
.ptabs > button.on { width: 41px; background: #f7f7f7; border-bottom-color: #f7f7f7; }
.ptabs > button svg { width: 19px; height: 19px; }
.parrows { position: absolute; right: 0; bottom: 0; display: flex; height: 19px; }
.parrows button { width: 18px; background: #fcfcfc; border: 1px solid #bbb; }
.la { border: 3px solid transparent; border-right: 4px solid #111; border-left: 0; }
.ra { border: 3px solid transparent; border-left: 4px solid #111; border-right: 0; }
.filter { height: 26px; margin: 0 5px 0 4px; border: 1px solid #bbb; justify-content: flex-start; padding-left: 2px; gap: 0; flex: none; }
.filter svg { width: 18px; height: 18px; }
.filter .tri { margin-top: 6px; }
.root { height: 22px; display: flex; align-items: center; gap: 4px; margin-top: 1px; padding-left: 4px; white-space: nowrap; }
.root svg { width: 18px; height: 18px; }
.tree { list-style: none; margin: 0 1px 0 0; padding: 0; overflow: hidden; }
.tree li { height: 22px; display: flex; align-items: center; white-space: nowrap; }
.exp { width: 26px; padding-left: 8px; justify-content: flex-start; flex: none; }
.exp .ra { border-width: 4px; border-left-width: 5px; border-left-color: #666; }
.tree svg { width: 18px; height: 18px; margin-right: 5px; }
.rollback { height: 4px; background: #3c82bd; margin: -1px 2px 0 0; }
.hscroll { margin: auto 1px 4px 2px; height: 16px; display: flex; background: #ececec; }
.hscroll button { width: 15px; }
.hscroll button svg { width: 10px; height: 10px; fill: none; stroke: #333; stroke-width: 1.8; }
.track { flex: 1; }
.thumb { width: 68%; height: 100%; background: #cacaca; }
.fly { position: absolute; right: -9px; top: 265px; width: 9px; height: 39px; background: #f7f7f7; border: 1px solid #888; border-left: 0; z-index: 2; }

.view { flex: 1; position: relative; min-width: 0; }
.scene { position: absolute; inset: 0; width: 100%; height: 100%; }
.mark { fill: #fff; opacity: .78; font-family: "Liberation Serif", serif; font-size: 47px; }
.cjk { font-family: "Noto Sans CJK SC", sans-serif; font-size: 51px; font-weight: 300; }
.axes { font-size: 10px; font-family: "Open Sans", sans-serif; }
.hud { position: relative; display: flex; justify-content: center; gap: 6px; padding-top: 5px; }
.hud .split { width: auto; gap: 4px; }
.hud .caret::before { border-width: 2px; border-top: 3px solid #777; border-bottom: 0; }
.taskpane { position: absolute; right: 0; top: 29px; width: 21px; background: #cfcfcf; overflow: hidden; border-left: 1px solid #999; }
.taskpane button { width: 20px; height: 24px; border-bottom: 1px solid #888; justify-content: flex-start; padding-left: 2px; overflow: hidden; background: #dedede; }
.taskpane button:last-child { border-bottom: 0; }
.taskpane button.on { background: #fff; }
.taskpane svg { width: 18px; height: 18px; }

.sheets { height: 17px; display: flex; border-top: 1px solid #888; border-bottom: 1px solid #777; flex: none; }
.navs { display: flex; width: 67px; background: #a8a8a8; border: 1px solid #777; border-left: 0; }
.navs button { flex: 1; border-right: 1px solid #c2c2c2; }
.navs svg { width: 13px; height: 13px; fill: #8c8c8c; stroke: #c8c8c8; }
.sheet { border-right: 1px solid #888; background: #cfcfcf; }
.sheet.on { width: 57px; background: #f9f9f9; font-weight: 700; }
.views { width: 68px; }
.study { width: 108px; padding-right: 8px; }
footer { height: 16px; display: flex; align-items: stretch; flex: none; font-size: 11px; line-height: 18px; white-space: nowrap; overflow: hidden; }
.edition { padding-left: 1px; margin-right: auto; }
.cell { padding-right: 7px; border-right: 1px solid #ccc; }
.editing { border-left: 1px solid #ccc; margin-left: 6px; padding-left: 4px; margin-right: 15px; }
.units { width: 152px; gap: 18px; border-left: 1px solid #ccc; line-height: 18px; padding-right: 26px; }
.units i { border: 3px solid transparent; border-bottom: 4px solid #333; border-top: 0; }
.tag { width: 24px; }
.tag svg { width: 16px; height: 16px; }
</style>
